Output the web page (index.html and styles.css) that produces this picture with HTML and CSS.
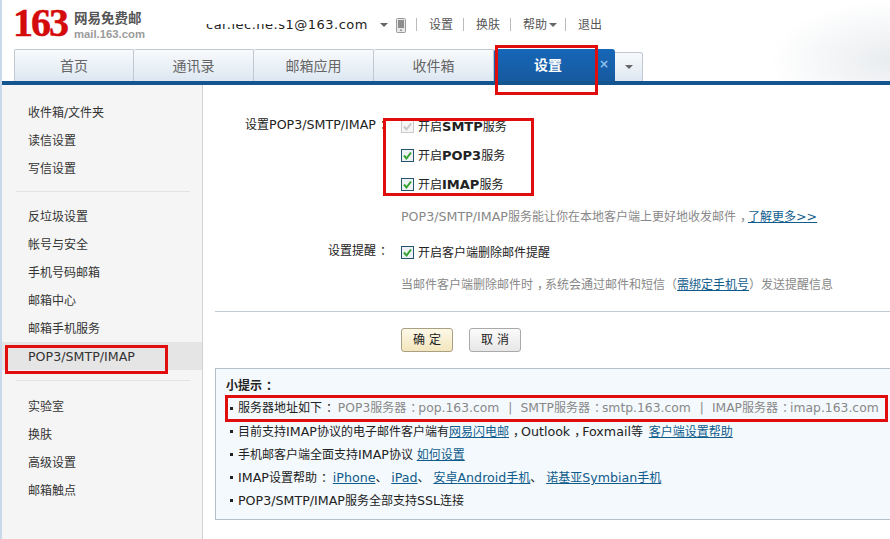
FILE: index.html
```html
<!DOCTYPE html>
<html lang="zh-CN">
<head>
<meta charset="utf-8">
<title>网易免费邮 - 设置</title>
<link rel="stylesheet" href="styles.css">
</head>
<body>
<svg class="defs" width="0" height="0" aria-hidden="true">
  <symbol id="chk" viewBox="0 0 13 13">
    <rect x=".5" y=".5" width="12" height="12" fill="#eef2f5" stroke="#23536f"/>
    <path d="M3 6.5 5.5 9.5 10 3.5" fill="none" stroke="#35a32f" stroke-width="2"/>
  </symbol>
  <symbol id="chk-off" viewBox="0 0 13 13">
    <rect x=".5" y=".5" width="12" height="12" fill="#f6f6f6" stroke="#c9c9c9"/>
    <path d="M3 6.5 5.5 9.5 10 3.5" fill="none" stroke="#c8c8c8" stroke-width="2"/>
  </symbol>
</svg>
<div class="app">
  <header class="header">
    <div class="top">
      <div class="logo">
        <span class="logo-num">163</span>
        <div class="logo-text">
          <span class="logo-cn">网易免费邮</span>
          <span class="logo-en">mail.163.com</span>
        </div>
      </div>
      <nav class="usernav">
        <span class="email">car.iec.he.s1@163.com<i class="email-mask"></i></span>
        <i class="caret caret-mail"></i>
        <svg class="phone" width="10" height="15" viewBox="0 0 10 15"><rect x=".5" y=".5" width="9" height="14" rx="1" fill="#e8e8e8" stroke="#9a9a9a"/><rect x="2" y="2" width="6" height="8" fill="#8d8d8d"/><rect x="4" y="11.500" width="2" height="1.500" fill="#999"/></svg>
        <a class="nav-link first">设置</a>
        <a class="nav-link">换肤</a>
        <a class="nav-link nav-help">帮助<i class="caret caret-help"></i></a>
        <a class="nav-link">退出</a>
      </nav>
    </div>
    <div class="tabs">
      <a class="tab">首页</a>
      <a class="tab">通讯录</a>
      <a class="tab">邮箱应用</a>
      <a class="tab">收件箱</a>
      <a class="tab tab-active"><span class="tab-label">设置</span><span class="tab-close">×</span></a>
      <a class="tab-more"><i class="caret"></i></a>
    </div>
  </header>
  <div class="bar"></div>
  <div class="body">
    <aside class="side">
      <ul class="side-group first">
        <li>收件箱/文件夹</li>
        <li>读信设置</li>
        <li>写信设置</li>
      </ul>
      <ul class="side-group">
        <li>反垃圾设置</li>
        <li>帐号与安全</li>
        <li>手机号码邮箱</li>
        <li>邮箱中心</li>
        <li>邮箱手机服务</li>
        <li class="active"><span class="en">POP3/SMTP/IMAP</span></li>
      </ul>
      <ul class="side-group last">
        <li>实验室</li>
        <li>换肤</li>
        <li>高级设置</li>
        <li>邮箱触点</li>
      </ul>
    </aside>
    <main class="main">
      <div class="form">
        <div class="label">设置<span class="en">POP3/SMTP/IMAP</span><span class="p">：</span></div>
        <div class="controls">
          <label class="check"><svg class="box" width="13" height="13"><use href="#chk-off"/></svg>开启<b class="strong">SMTP</b>服务</label>
          <label class="check"><svg class="box" width="13" height="13"><use href="#chk"/></svg>开启<b class="strong">POP3</b>服务</label>
          <label class="check"><svg class="box" width="13" height="13"><use href="#chk"/></svg>开启<b class="strong">IMAP</b>服务</label>
          <p class="note note-a"><span class="en">POP3/SMTP/IMAP</span>服务能让你在本地客户端上更好地收发邮件<span class="p">，</span><a class="link">了解更多<span class="en">&gt;&gt;</span></a></p>
        </div>
        <div class="label label-b">设置提醒<span class="p">：</span></div>
        <div class="controls controls-b">
          <label class="check"><svg class="box" width="13" height="13"><use href="#chk"/></svg>开启客户端删除邮件提醒</label>
          <p class="note note-b">当邮件客户端删除邮件时<span class="p">，</span>系统会通过邮件和短信（<a class="link">需绑定手机号</a>）发送提醒信息</p>
        </div>
      </div>
      <div class="rule"></div>
      <div class="actions">
        <button class="btn btn-ok">确 定</button>
        <button class="btn">取 消</button>
      </div>
      <section class="tips">
        <h3 class="tips-title">小提示<span class="p">：</span></h3>
        <ul class="tips-list">
          <li>服务器地址如下<span class="p">：</span> <span class="gray"><span class="en">POP3</span>服务器<span class="p">：</span><span class="en">pop.163.com</span><span class="sep">|</span><span class="en">SMTP</span>服务器<span class="p">：</span><span class="en">smtp.163.com</span><span class="sep">|</span><span class="en">IMAP</span>服务器<span class="p">：</span><span class="en">imap.163.com</span></span></li>
          <li>目前支持<span class="en">IMAP</span>协议的电子邮件客户端有<a class="link">网易闪电邮</a><span class="p">，</span><span class="en">Outlook</span><span class="p">，</span><span class="en">Foxmail</span>等 <a class="link gap">客户端设置帮助</a></li>
          <li>手机邮客户端全面支持<span class="en">IMAP</span>协议 <a class="link">如何设置</a></li>
          <li><span class="en">IMAP</span>设置帮助<span class="p">：</span> <a class="link en">iPhone</a>、 <a class="link en">iPad</a>、 <a class="link">安卓<span class="en">Android</span>手机</a>、 <a class="link">诺基亚<span class="en">Symbian</span>手机</a></li>
          <li><span class="en">POP3/SMTP/IMAP</span>服务全部支持<span class="en">SSL</span>连接</li>
        </ul>
      </section>
    </main>
  </div>
  <i class="mark mark-tab"></i>
  <i class="mark mark-side"></i>
  <i class="mark mark-checks"></i>
  <i class="mark mark-tip"></i>
</div>
</body>
</html>
```
FILE: styles.css
```css
* { box-sizing: border-box; }
html, body { margin: 0; padding: 0; background: #fff; }
.defs { position: absolute; }
.app {
  position: relative;
  width: 890px;
  height: 539px;
  overflow: hidden;
  border-left: 2px solid #c9d9ea;
  font: 12px/24px "DejaVu Sans", "Noto Sans CJK SC", sans-serif;
  color: #222;
}
.en { font-size: 12.65px; }
.p { padding-left: 4px; letter-spacing: -4px; }
ul { list-style: none; margin: 0; padding: 0; }
p, h3 { margin: 0; }

.header {
  height: 81px;
  background: radial-gradient(120px 60px at 100% 75%, #e9ecef, #fff 100%);
}
.top { display: flex; height: 49px; }
.logo { display: flex; width: 204px; padding: 3px 0 0 11px; }
.logo-num {
  font: bold 40px/40px "Liberation Serif", serif;
  letter-spacing: -2px;
  color: #d40b0b;
  width: 61px;
  -webkit-text-stroke: .5px #d40b0b;
}
.logo-text { display: flex; flex-direction: column; padding-top: 7px; }
.logo-cn { font-size: 13.500px; font-weight: bold; line-height: 17px; color: #555; }
.logo-en { font: bold 11.300px/15px "Liberation Sans", sans-serif; color: #9b9b9b; }

.usernav { display: flex; align-items: flex-start; padding-top: 13px; color: #555; }
.email {
  position: relative;
  font-size: 13px;
  font-weight: 500;
  color: #222;
  letter-spacing: .5px;
  width: 170px;
  white-space: nowrap;
}
.email-mask {
  position: absolute;
  left: 0;
  top: 4px;
  width: 80px;
  height: 7px;
  background: #fff;
}
.caret {
  display: inline-block;
  width: 0;
  height: 0;
  border: 4px solid transparent;
  border-top: 4px solid #666;
  border-bottom: 0;
}
.caret-mail { margin: 10px 8px 0 4px; }
.phone { margin-top: 5px; }
.nav-link { position: relative; padding: 0 11px 0 12px; }
.nav-link + .nav-link::before, .nav-link.first::before {
  content: "";
  position: absolute;
  left: -1px;
  top: 5px;
  height: 13px;
  border-left: 1px solid #bbb;
}
.nav-link.first { margin-left: 11px; }
.nav-help { padding-right: 9px; }
.caret-help { margin-left: 2px; vertical-align: 2px; }

.tabs { display: flex; align-items: flex-end; height: 32px; padding-left: 12px; }
.tab {
  width: 120px;
  height: 32px;
  border: 1px solid #c0c9d2;
  border-bottom: 0;
  border-radius: 2px 2px 0 0;
  background: linear-gradient(#f8fafc, #dde7f2);
  text-align: center;
  font-size: 14px;
  line-height: 33px;
  color: #666;
}
.tab + .tab { border-left: 0; }
.tab-active {
  width: 121px;
  border: 0;
  border-radius: 3px 3px 0 0;
  background: linear-gradient(#1766b8, #165a9f);
  color: #fff;
  font-weight: bold;
  display: flex;
}
.tab-label { width: 108px; }
.tab-close { margin-left: -3px; color: #8fc0ee; font-size: 12px; line-height: 31px; font-weight: bold; }
.tab-more {
  display: flex;
  align-items: center;
  justify-content: center;
  width: 28px;
  height: 29px;
  border: 1px solid #c0c9d2;
  border-left: 0;
  border-bottom: 0;
  border-radius: 0 3px 0 0;
  background: linear-gradient(#f8fafc, #dde7f2);
}

.bar { height: 4px; background: #15558f; }
.body { display: flex; height: 454px; }
.side {
  width: 201px;
  padding-top: 13px;
  background: #f5f5f5;
  border-right: 1px solid #cfd3d6;
  color: #333;
}
.side-group { position: relative; padding-bottom: 22px; }
.side-group::after {
  content: "";
  position: absolute;
  left: 14px;
  right: 12px;
  bottom: 11px;
  border-top: 1px solid #e2e2e2;
}
.side-group.first { padding-bottom: 20px; }
.side-group.first::after { bottom: 10px; }
.side-group.last::after { display: none; }
.side-group li { height: 28px; line-height: 30px; padding-left: 26px; }
.side-group li.active { background: #e5e5e5; }

.main { flex: 1; padding: 27px 0 0 12px; min-width: 0; }
.form { display: grid; grid-template-columns: 173px 1fr; column-gap: 13px; }
.label { text-align: right; line-height: 24px; margin-left: -12px; padding-top: 1px; white-space: nowrap; }
.label-b { padding-top: 10px; }
.check { display: flex; align-items: center; height: 29px; white-space: nowrap; }
.box { margin-right: 4px; flex: none; }
.strong { font-size: 13px; font-weight: bold; }
.note { color: #888; white-space: nowrap; }
.note-a { margin-top: 6px; }
.controls-b { margin-top: 9px; }
.note-b { margin-top: 6px; }
.link { color: #0f5c8c; text-decoration: underline; }
.rule { margin-top: 14px; border-top: 1px solid #c2ccd2; }
.actions { display: flex; gap: 16px; margin: 16px 0 16px 186px; }
.btn {
  width: 52px;
  height: 24px;
  padding: 0;
  border: 1px solid #a9a9a9;
  border-radius: 3px;
  background: linear-gradient(#fbfbfb, #e7e7e7);
  font: 12px/22px "DejaVu Sans", "Noto Sans CJK SC", sans-serif;
  color: #222;
}
.btn-ok { background: linear-gradient(#fdf9e8, #f3e6bd); border-color: #a9a083; }
.tips {
  height: 152px;
  padding: 7px 0 0 10px;
  background: #f4f9fd;
  border: 1px solid #b4c0c8;
  border-right: 0;
}
.tips-title { font-size: 12px; font-weight: bold; line-height: 21px; }
.tips-list li {
  position: relative;
  height: 23px;
  line-height: 23px;
  padding-left: 12px;
  white-space: nowrap;
}
.tips-list li::before {
  content: "";
  position: absolute;
  left: 4px;
  top: 10px;
  width: 3px;
  height: 3px;
  background: #222;
}
.gray { color: #888; }
.gray .en { font-size: 12.350px; }
.sep { margin: 0 8px 0 9px; }
.gap { margin-left: 2px; }

.mark { position: absolute; border: 3px solid #e10d0d; }
.mark-tab { left: 493px; top: 45px; width: 103px; height: 50px; }
.mark-side { left: 3px; top: 345px; width: 163px; height: 29px; }
.mark-checks { left: 381px; top: 118px; width: 151px; height: 78px; }
.mark-tip { left: 223px; top: 395px; width: 663px; height: 27px; }
```
